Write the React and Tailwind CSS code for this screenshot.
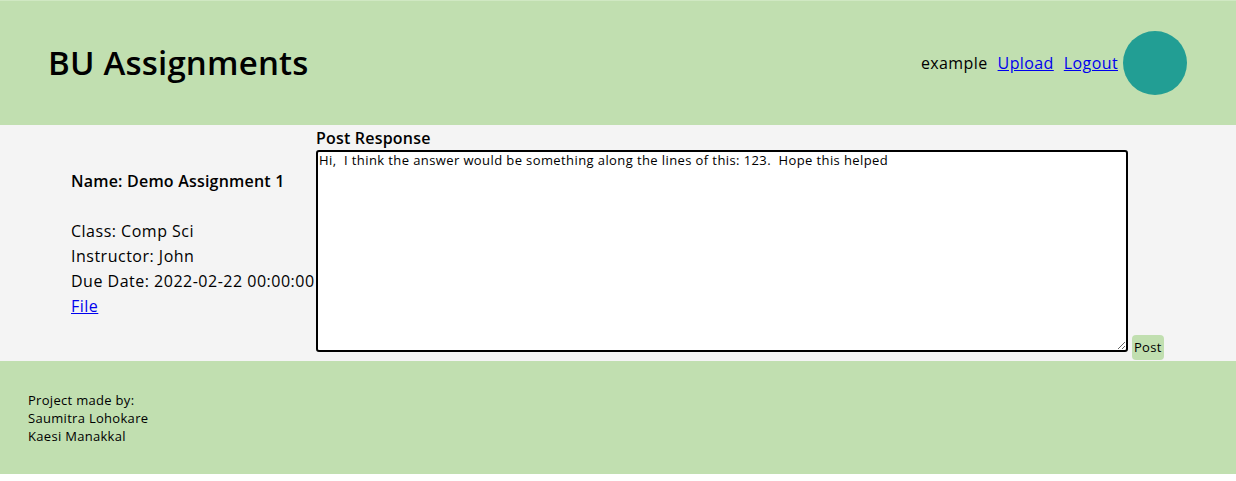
export default function App() {
  const font = { fontFamily: '"Open Sans", "Noto Sans", sans-serif' };
  return (
    <div style={font} className="w-[1236px] bg-white text-black">
      <header className="h-[125px] bg-[#c1dfb0] border-t border-[#d0e8c3] flex items-center justify-between pl-[48px] pr-[49px]">
        <h1 className="text-[33px] font-semibold tracking-[0.2px]">BU Assignments</h1>
        <nav className="flex items-center text-[16px] tracking-[0.4px]">
          <span className="mr-[10px]">example</span>
          <a href="#" className="text-[#0000ee] underline mr-[10px]">Upload</a>
          <a href="#" className="text-[#0000ee] underline mr-[5px]">Logout</a>
          <div className="w-[64px] h-[64px] rounded-full bg-[#229e94]"></div>
        </nav>
      </header>
      <main className="h-[236px] bg-[#f4f4f4] flex items-start pl-[71px]">
        <div className="w-[245px] pt-[44px] text-[16px] leading-[25px] whitespace-nowrap tracking-[0.5px]">
          <div className="font-semibold tracking-[0.2px]">Name: Demo Assignment 1</div>
          <div className="h-[25px]"></div>
          <div>Class: Comp Sci</div>
          <div>Instructor: John</div>
          <div>Due Date: 2022-02-22 00:00:00</div>
          <a href="#" className="text-[#0000ee] underline">File</a>
        </div>
        <div className="flex flex-col pt-[1px]">
          <label className="font-semibold text-[16px] leading-[24px] tracking-[0.2px]">Post Response</label>
          <textarea
            style={font}
            className="w-[812px] h-[202px] border-2 border-black rounded-[3px] bg-white text-[13px] leading-[17px] tracking-[0.4px] px-[1px] py-0 resize-y"
            defaultValue="Hi,  I think the answer would be something along the lines of this: 123.  Hope this helped"
          />
        </div>
        <button className="ml-[4px] mt-[210px] bg-[#c1dfb0] rounded-[4px] px-[2px] h-[25px] text-[13px] tracking-[0.3px]">Post</button>
      </main>
      <footer className="h-[113px] bg-[#c1dfb0] pl-[28px] pt-[30px] text-[13px] leading-[18px] tracking-[0.3px]">
        <div>Project made by:</div>
        <div>Saumitra Lohokare</div>
        <div>Kaesi Manakkal</div>
      </footer>
    </div>
  );
}
